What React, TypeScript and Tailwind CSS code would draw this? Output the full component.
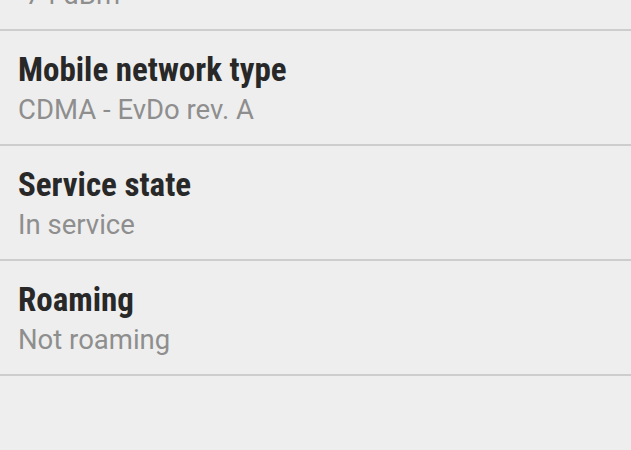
const rows = [
  { title: "Signal strength", value: "-74 dBm" },
  { title: "Mobile network type", value: "CDMA - EvDo rev. A" },
  { title: "Service state", value: "In service" },
  { title: "Roaming", value: "Not roaming" },
];

export default function App() {
  return (
    <div className="w-[631px] h-[450px] overflow-hidden bg-[#eeeeee]" style={{ fontFamily: "Roboto, 'Noto Sans', sans-serif" }}>
      <div className="-mt-[84px]">
        {rows.map(r => (
          <div key={r.title} className="h-[115px] px-[18px] pt-[20px] border-b-2 border-[#cdcdcd]">
            <div className="font-['Roboto_Condensed',Roboto,sans-serif] text-[33px] leading-[38px] font-bold text-[#282828]">{r.title}</div>
            <div className="mt-[6px] text-[27.5px] leading-[30px] text-[#8e8e8e]">{r.value}</div>
          </div>
        ))}
      </div>
    </div>
  );
}
